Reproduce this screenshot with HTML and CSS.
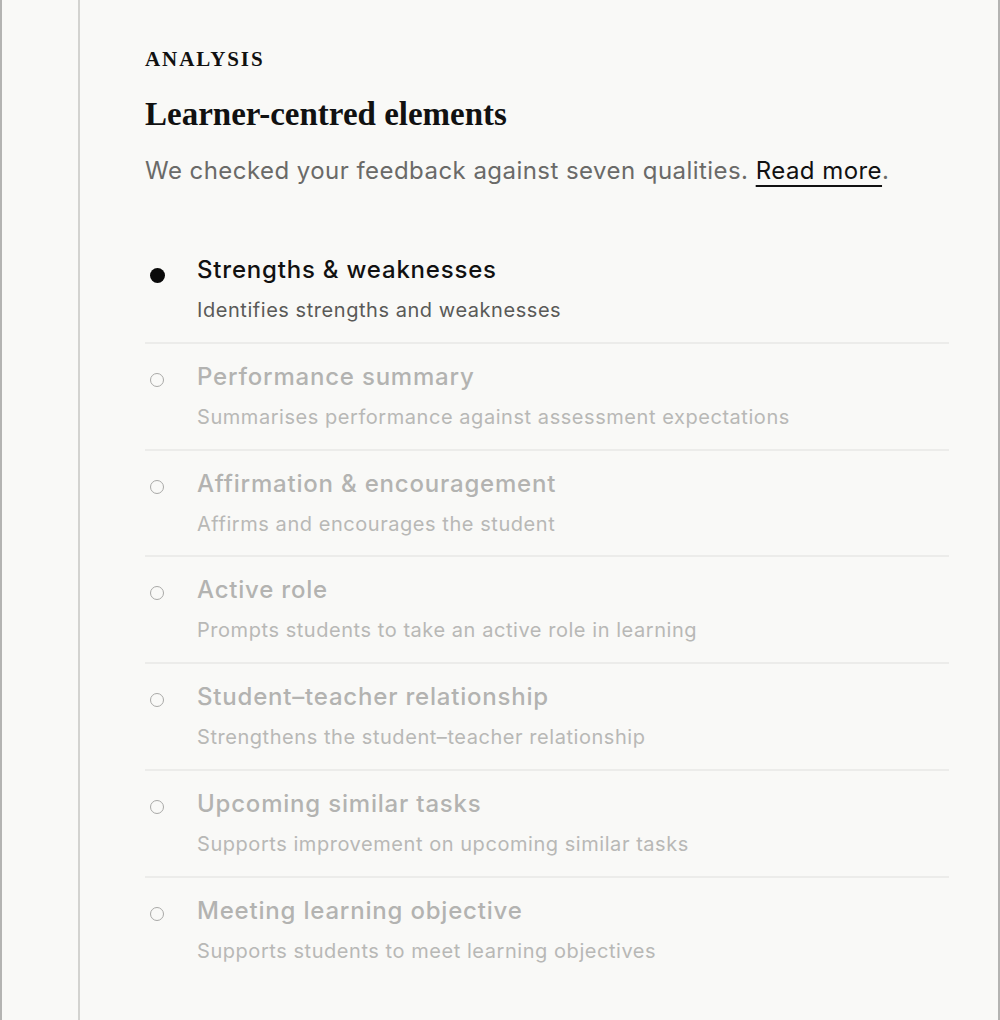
FILE: index.html
```html
<!DOCTYPE html>
<html lang="en">
<head>
<meta charset="utf-8">
<title>Analysis</title>
<link rel="stylesheet" href="styles.css">
</head>
<body>
<div class="frame">
  <div class="rail"></div>
  <main class="main">
    <div class="eyebrow">ANALYSIS</div>
    <h1 class="heading">Learner-centred elements</h1>
    <p class="intro">We checked your feedback against seven qualities. <a class="link" href="#">Read more</a>.</p>
    <ul class="list">
      <li class="item active">
        <span class="dot filled"></span>
        <div class="text">
          <div class="title">Strengths &amp; weaknesses</div>
          <div class="desc">Identifies strengths and weaknesses</div>
        </div>
      </li>
      <li class="item">
        <span class="dot empty"></span>
        <div class="text">
          <div class="title">Performance summary</div>
          <div class="desc">Summarises performance against assessment expectations</div>
        </div>
      </li>
      <li class="item">
        <span class="dot empty"></span>
        <div class="text">
          <div class="title">Affirmation &amp; encouragement</div>
          <div class="desc">Affirms and encourages the student</div>
        </div>
      </li>
      <li class="item">
        <span class="dot empty"></span>
        <div class="text">
          <div class="title">Active role</div>
          <div class="desc">Prompts students to take an active role in learning</div>
        </div>
      </li>
      <li class="item">
        <span class="dot empty"></span>
        <div class="text">
          <div class="title">Student–teacher relationship</div>
          <div class="desc">Strengthens the student–teacher relationship</div>
        </div>
      </li>
      <li class="item">
        <span class="dot empty"></span>
        <div class="text">
          <div class="title">Upcoming similar tasks</div>
          <div class="desc">Supports improvement on upcoming similar tasks</div>
        </div>
      </li>
      <li class="item">
        <span class="dot empty"></span>
        <div class="text">
          <div class="title">Meeting learning objective</div>
          <div class="desc">Supports students to meet learning objectives</div>
        </div>
      </li>
    </ul>
  </main>
</div>
</body>
</html>
```
FILE: styles.css
```css
* { box-sizing: border-box; }
html, body {
  margin: 0;
  padding: 0;
  background: #f9f9f7;
}
body {
  font-family: Inter, "Liberation Sans", sans-serif;
  color: #111;
}
.frame {
  display: flex;
  height: 1020px;
  border-left: 2px solid #b4b4b2;
  border-right: 2px solid #b4b4b2;
  overflow: hidden;
}
.rail {
  width: 78px;
  flex: none;
  border-right: 2px solid #d3d3d0;
}
.main {
  flex: 1;
  padding: 45px 49px 0 65px;
}
.eyebrow {
  font-family: "Liberation Serif", "DejaVu Serif", serif;
  font-weight: 700;
  font-size: 21px;
  line-height: 28px;
  letter-spacing: 1.9px;
  color: #111;
}
.heading {
  margin: 21px 0 0;
  font-family: "Liberation Serif", "DejaVu Serif", serif;
  font-weight: 700;
  font-size: 33px;
  line-height: 40px;
  color: #111;
}
.intro {
  margin: 19px 0 0;
  font-size: 24px;
  line-height: 36px;
  letter-spacing: 0.45px;
  color: #6a6a68;
}
.link {
  color: #111;
  text-decoration: underline;
  text-decoration-thickness: 2px;
  text-underline-offset: 6px;
}
.list {
  list-style: none;
  margin: 48px 0 0;
  padding: 0;
}
.item {
  display: grid;
  grid-template-columns: 52px 1fr;
  padding: 17px 0 17.8px;
  border-bottom: 2px solid #ececea;
}
.item:last-child { border-bottom: none; }
.text {
  display: flex;
  flex-direction: column;
  gap: 10px;
}
.title {
  font-size: 24px;
  line-height: 32px;
  font-weight: 500;
  letter-spacing: 0.8px;
  color: #b3b3b1;
}
.desc {
  font-size: 20px;
  line-height: 28px;
  letter-spacing: 0.55px;
  color: #b8b8b6;
}
.item.active .title { color: #111; }
.item.active .desc { color: #5a5a58; }
.dot {
  display: block;
  margin-left: 5px;
  border-radius: 50%;
}
.dot.filled {
  width: 15px;
  height: 15px;
  margin-top: 14px;
  background: #0a0a0a;
}
.dot.empty {
  width: 14px;
  height: 14px;
  margin-top: 12px;
  border: 1.6px solid #a9a9a7;
}
```
